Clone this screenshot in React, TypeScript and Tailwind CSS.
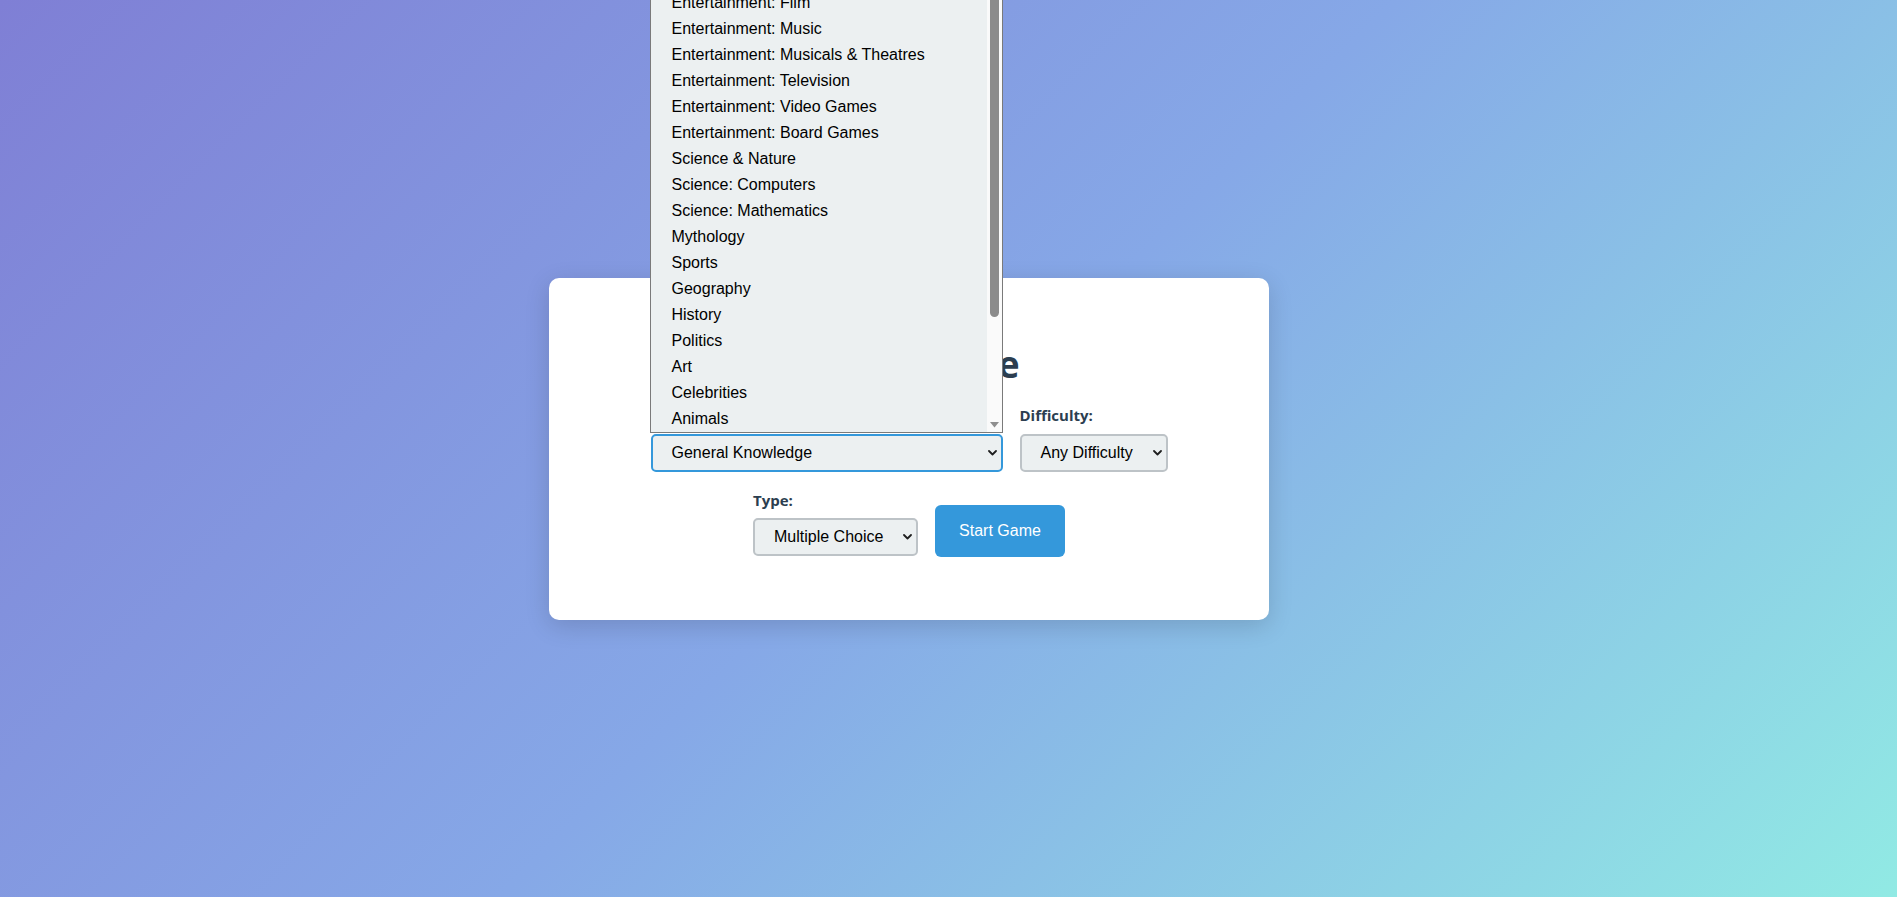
import React from "react";

const categories = [
  "Any Category",
  "General Knowledge",
  "Entertainment: Books",
  "Entertainment: Film",
  "Entertainment: Music",
  "Entertainment: Musicals & Theatres",
  "Entertainment: Television",
  "Entertainment: Video Games",
  "Entertainment: Board Games",
  "Science & Nature",
  "Science: Computers",
  "Science: Mathematics",
  "Mythology",
  "Sports",
  "Geography",
  "History",
  "Politics",
  "Art",
  "Celebrities",
  "Animals",
];

function Chevron() {
  return (
    <svg width="9" height="6" viewBox="0 0 9 6" className="shrink-0">
      <polyline points="1,1 4.5,4.5 8,1" fill="none" stroke="#1f1f1f" strokeWidth="1.8" strokeLinecap="round" strokeLinejoin="round" />
    </svg>
  );
}

function FakeSelect({ value, width, focused }: { value: string; width: string; focused?: boolean }) {
  return (
    <div
      className={`${width} h-[38px] border-2 rounded-[5px] bg-[#ecf0f1] flex items-center justify-between pl-[19px] pr-[4px] text-[16px] text-black font-['Liberation_Sans',Arial,sans-serif] ${
        focused ? "border-[#3498db]" : "border-[#bdc3c7]"
      }`}
    >
      <span className="whitespace-nowrap">{value}</span>
      <Chevron />
    </div>
  );
}

function Label({ children }: { children: React.ReactNode }) {
  return <label className="text-[15px] leading-[20px] font-bold text-[#2c3e50]">{children}</label>;
}

export default function App() {
  return (
    <div className="h-screen w-full overflow-hidden bg-[linear-gradient(135deg,#7f7fd5,#86a8e7,#91eae4)] flex items-center justify-center pr-[79px] font-['Open_Sans',sans-serif]">
      <div className="w-[720px] bg-white rounded-[10px] shadow-[0_6px_24px_rgba(0,0,0,0.15)] pt-[62px] pb-[64px] flex flex-col items-center">
        <h1 className="text-[37px] leading-[48px] font-bold text-[#2c3e50]">Trivia Game</h1>

        {/* first row */}
        <div className="mt-[17px] flex items-end gap-[17px]">
          <div className="flex flex-col gap-[9px]">
            <Label>Category:</Label>
            <div className="relative">
              <FakeSelect value="General Knowledge" width="w-[352px]" focused />
              {/* open dropdown list */}
              <div className="absolute left-[-1px] right-0 bottom-[calc(100%+1px)] z-10 border border-[#7a7a7a] bg-[#ecf0f1] flex font-['Liberation_Sans',Arial,sans-serif]">
                <div className="flex-1 flex flex-col">
                  {categories.map((c) => (
                    <div key={c} className="h-[26px] leading-[26px] pl-[21px] text-[16px] text-black whitespace-nowrap">
                      {c}
                    </div>
                  ))}
                </div>
                <div className="w-[15px] bg-[#fafafa] relative">
                  <div className="absolute left-[3px] right-[3px] top-[17px] bottom-[115px] bg-[#8b8b8b] rounded-full" />
                  <svg width="9" height="6" viewBox="0 0 9 6" className="absolute left-[3px] bottom-[4px]">
                    <polygon points="0,0 9,0 4.5,5.5" fill="#8f8f8f" />
                  </svg>
                </div>
              </div>
            </div>
          </div>
          <div className="flex flex-col gap-[9px]">
            <Label>Difficulty:</Label>
            <FakeSelect value="Any Difficulty" width="w-[148px]" />
          </div>
        </div>

        {/* second row */}
        <div className="mt-[18px] flex items-end gap-[17px]">
          <div className="flex flex-col gap-[8px]">
            <Label>Type:</Label>
            <FakeSelect value="Multiple Choice" width="w-[165px]" />
          </div>
          <button className="w-[130px] h-[52px] mb-[-1px] rounded-[6px] bg-[#3498db] text-white text-[16px] font-['Liberation_Sans',Arial,sans-serif]">
            Start Game
          </button>
        </div>
      </div>
    </div>
  );
}
